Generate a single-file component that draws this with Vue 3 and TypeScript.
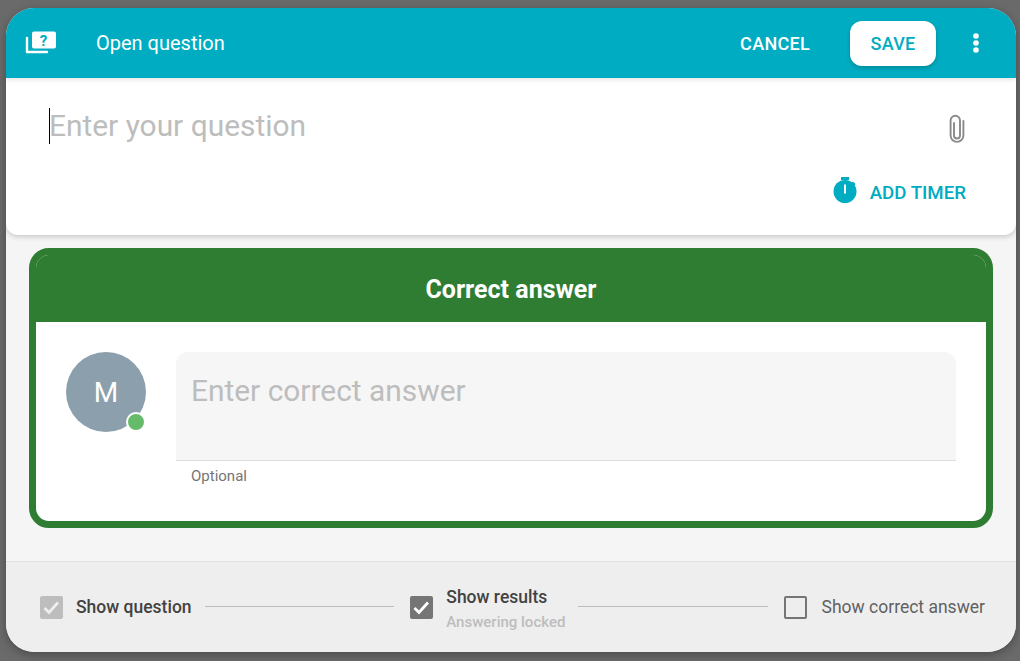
<script setup lang="ts">
interface Step {
  label: string;
  sub?: string;
  state: "disabled" | "checked" | "empty";
}

const steps: Step[] = [
  { label: "Show question", state: "disabled" },
  { label: "Show results", sub: "Answering locked", state: "checked" },
  { label: "Show correct answer", state: "empty" },
];
</script>

<template>
  <div class="page">
    <div class="dialog">
      <header class="topbar">
        <svg class="type-icon" viewBox="0 0 32 24" width="32" height="24">
          <path d="M7 2.5a2 2 0 0 1 2-2h20a2 2 0 0 1 2 2v13a2 2 0 0 1-2 2H9a2 2 0 0 1-2-2z" fill="#fff" />
          <path d="M2 7v14h20" fill="none" stroke="#fff" stroke-width="2.4" stroke-linecap="round" stroke-linejoin="round" />
          <text x="18.5" y="14.5" text-anchor="middle" class="type-icon-q">?</text>
        </svg>
        <span class="topbar-title">Open question</span>
        <span class="topbar-cancel">CANCEL</span>
        <span class="topbar-save">SAVE</span>
        <svg class="topbar-more" viewBox="0 0 8 22" width="8" height="22">
          <circle cx="4" cy="4" r="2.8" fill="#fff" />
          <circle cx="4" cy="11" r="2.8" fill="#fff" />
          <circle cx="4" cy="18" r="2.8" fill="#fff" />
        </svg>
      </header>

      <section class="question">
        <div class="question-row">
          <div class="question-text"><i class="caret"></i>Enter your question</div>
          <svg class="clip" viewBox="0 0 20 30" width="20" height="30">
            <path d="M7 9v12.5a3 3 0 0 0 6 0V6.5a4.7 4.7 0 0 0-9.4 0v15a6.4 6.4 0 0 0 12.8 0V7" fill="none" stroke="#8a8a8a" stroke-width="1.9" stroke-linecap="round" />
          </svg>
        </div>
        <div class="timer-row">
          <svg class="timer-icon" viewBox="0 0 24 28" width="24" height="28">
            <rect x="8" y="0" width="8" height="3" fill="#00acc1" />
            <circle cx="12" cy="14.5" r="11.5" fill="#00acc1" />
            <path d="M20 4.5l2.6 2.6-2 2-2.6-2.6z" fill="#00acc1" />
            <rect x="11" y="7.5" width="2" height="9" fill="#fff" />
          </svg>
          <span>ADD TIMER</span>
        </div>
      </section>

      <section class="answer">
        <div class="answer-head">Correct answer</div>
        <div class="answer-body">
          <div class="avatar">
            M
            <i class="avatar-dot"></i>
          </div>
          <div class="answer-field">
            <div class="answer-input">Enter correct answer</div>
            <div class="answer-hint">Optional</div>
          </div>
        </div>
      </section>

      <footer class="steps">
        <template v-for="(step, i) in steps" :key="step.label">
          <div class="step" :class="`step-${step.state}`">
            <span class="box">
              <svg v-if="step.state !== 'empty'" viewBox="0 0 23 23" width="23" height="23">
                <path d="M4.5 12l4.5 4.5 9-10" fill="none" :stroke="step.state === 'disabled' ? '#eeeeee' : '#fff'" stroke-width="2.8" />
              </svg>
            </span>
            <div class="step-text">
              <div class="step-label">{{ step.label }}</div>
              <div v-if="step.sub" class="step-sub">{{ step.sub }}</div>
            </div>
          </div>
          <div v-if="i < steps.length - 1" class="step-line"></div>
        </template>
      </footer>
    </div>
  </div>
</template>

<style>
html,
body {
  margin: 0;
  background: #666;
}
</style>

<style scoped>
.page {
  box-sizing: border-box;
  width: 1020px;
  height: 661px;
  padding: 8px 4px 9px 6px;
  background: #6a6a6a;
  font-family: Roboto, "Liberation Sans", sans-serif;
  overflow: hidden;
}

.dialog {
  display: flex;
  flex-direction: column;
  height: 100%;
  border-radius: 28px;
  background: #f5f5f5;
  overflow: hidden;
  box-shadow: 0 3px 10px rgba(0, 0, 0, 0.3);
}

.topbar {
  position: relative;
  z-index: 1;
  display: flex;
  align-items: center;
  flex: none;
  height: 70px;
  padding: 0 36px 0 19px;
  background: #00acc1;
  color: #fff;
  box-shadow: 0 2px 4px rgba(0, 0, 0, 0.1);
}

.type-icon {
  flex: none;
}

.type-icon-q {
  font: 700 15px Roboto, sans-serif;
  fill: #00acc1;
}

.topbar-title {
  margin-left: 39px;
  font-size: 20px;
  flex: 1;
}

.topbar-cancel {
  font-size: 18px;
  font-weight: 500;
  letter-spacing: 0.3px;
}

.topbar-save {
  width: 86px;
  height: 45px;
  margin: 0 36px 0 40px;
  border-radius: 12px;
  background: #fff;
  color: #00acc1;
  font-size: 18px;
  font-weight: 500;
  letter-spacing: 0.3px;
  line-height: 45px;
  text-align: center;
  box-shadow: 0 2px 4px rgba(0, 0, 0, 0.2);
}

.question {
  flex: none;
  box-sizing: border-box;
  height: 157px;
  padding: 30px 50px 0 43px;
  background: #fff;
  border-radius: 0 0 12px 12px;
  box-shadow: 0 2px 5px rgba(0, 0, 0, 0.18);
}

.question-row {
  display: flex;
  justify-content: space-between;
  height: 60px;
}

.question-text {
  position: relative;
  font-size: 29.9px;
  line-height: 36px;
  color: #bdbdbd;
}

.caret {
  position: absolute;
  left: 0;
  top: 0;
  width: 1px;
  height: 36px;
  background: #000;
}

.clip {
  margin: 6px -1px 0 0;
}

.timer-row {
  display: flex;
  justify-content: flex-end;
  align-items: center;
  gap: 13px;
  color: #00acc1;
  font-size: 18.7px;
  font-weight: 500;
  height: 30px;
  margin-top: 10px;
}

.timer-icon {
  margin-top: -4px;
}

.answer {
  flex: none;
  box-sizing: border-box;
  height: 280px;
  margin: 13px 23px 0;
  border: 7px solid #2e7d32;
  border-radius: 20px;
  background: #fff;
}

.answer-head {
  height: 67px;
  border-radius: 13px 13px 0 0;
  background: #2e7d32;
  color: #fff;
  font-size: 25px;
  font-weight: 700;
  line-height: 69px;
  text-align: center;
}

.answer-body {
  display: flex;
  gap: 30px;
  padding: 30px;
}

.avatar {
  position: relative;
  flex: none;
  width: 80px;
  height: 80px;
  border-radius: 50%;
  background: #8ba0ac;
  color: #fff;
  font-size: 28px;
  line-height: 82px;
  text-align: center;
}

.avatar-dot {
  position: absolute;
  right: 0;
  bottom: 0;
  box-sizing: border-box;
  width: 20px;
  height: 20px;
  border: 2px solid #fff;
  border-radius: 50%;
  background: #66bb6a;
}

.answer-field {
  flex: 1;
}

.answer-input {
  box-sizing: border-box;
  height: 109px;
  padding: 21px 15px 0;
  border-bottom: 1px solid #ddd;
  border-radius: 12px 12px 0 0;
  background: #f6f6f6;
  color: #bdbdbd;
  font-size: 29.9px;
  line-height: 36px;
}

.answer-hint {
  padding: 6px 15px 0;
  color: #757575;
  font-size: 15px;
  line-height: 18px;
}

.steps {
  display: flex;
  align-items: center;
  flex: 1;
  margin-top: 33px;
  padding: 0 31px 0 34px;
  border-top: 1px solid #e0e0e0;
  background: #eee;
}

.step {
  display: flex;
  align-items: center;
  flex: none;
  gap: 13px;
}

.box {
  box-sizing: border-box;
  flex: none;
  width: 23px;
  height: 23px;
  border-radius: 2px;
}

.step-disabled .box {
  background: #bdbdbd;
}

.step-checked .box {
  background: #757575;
}

.step-checked .step-text {
  padding-top: 2px;
}

.step-empty {
  gap: 14.5px;
}

.step-empty .box {
  border: 2px solid #757575;
}

.step-label {
  color: #424242;
  font-size: 17.5px;
  font-weight: 500;
  line-height: 22px;
}

.step-empty .step-label {
  color: #616161;
  font-weight: 400;
}

.step-sub {
  margin-top: 5px;
  color: #bdbdbd;
  font-size: 15px;
  font-weight: 500;
  line-height: 18px;
}

.step-line {
  flex: 1;
  height: 1px;
  margin: 0 16px 2px 13px;
  background: #bdbdbd;
}
</style>
